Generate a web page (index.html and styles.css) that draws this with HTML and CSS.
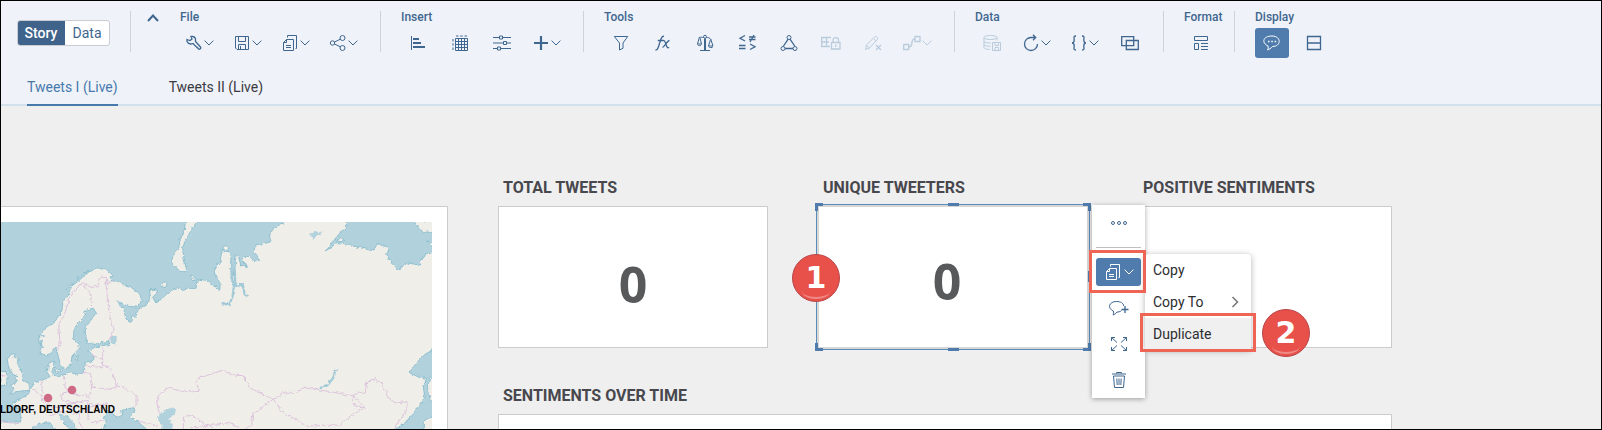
FILE: index.html
```html
<!DOCTYPE html>
<html lang="en">
<head>
<meta charset="utf-8">
<title>Tweets Story</title>
<link rel="stylesheet" href="styles.css">
</head>
<body>
<svg class="defs" aria-hidden="true">
  <symbol id="chev" viewBox="0 0 10 6"><path d="M.6.6 5 5 9.400.6"/></symbol>
  <symbol id="copy" viewBox="0 0 18 18"><path d="M5.500 5.500H12.500V16.500H2.500V8.500zM5.500 5.500V8.500H2.500M5 11.500h5M5 13.500h5M6.500 3.500V1.500H15.500V14.500H14.500"/></symbol>
</svg>
<div class="app">
  <header class="header">
    <div class="toolbar">
      <div class="mode">
        <button class="mode-btn mode-on">Story</button><button class="mode-btn">Data</button>
      </div>
      <div class="collapse">
        <button class="collapse-btn" aria-label="Collapse"><svg viewBox="0 0 12 8"><path d="M1 7l5-5.500L11 7"/></svg></button>
      </div>
      <section class="group">
        <h2 class="group-name">File</h2>
        <div class="tools">
          <button class="tool split" aria-label="Edit story"><svg class="ico" viewBox="0 0 18 18"><path class="mid" d="M2 5.500 5 6.500 7 5 6 2.500C8 2 10 3 10.500 5v2.500l5 5.500c1 1.200-.8 3-2.200 1.800L8 9.500C5.500 10.500 3 9.500 2 7.500zM12.800 13.200h.4"/></svg><svg class="chev"><use href="#chev"/></svg></button>
          <button class="tool split" aria-label="Save"><svg class="ico" viewBox="0 0 18 18"><path d="M2.500 2.500h13v13H4l-1.500-1.500zM5.500 2.500v5h7v-5M5.500 15.500v-5h7v5M7.500 12v3"/></svg><svg class="chev"><use href="#chev"/></svg></button>
          <button class="tool split" aria-label="Copy"><svg class="ico"><use href="#copy"/></svg><svg class="chev"><use href="#chev"/></svg></button>
          <button class="tool split" aria-label="Share"><svg class="ico" viewBox="0 0 18 18"><circle cx="3.500" cy="9" r="2.200"/><circle cx="13.500" cy="4" r="2.500"/><circle cx="13.500" cy="14" r="2.500"/><path d="M5.500 8 11.300 5.200M5.500 10l5.800 2.800"/></svg><svg class="chev"><use href="#chev"/></svg></button>
        </div>
      </section>
      <section class="group">
        <h2 class="group-name">Insert</h2>
        <div class="tools">
          <button class="tool" aria-label="Chart"><svg class="ico" viewBox="0 0 18 18"><path d="M2.500 2v14"/><path class="bold" d="M4 5h6M4 9h8M4 13h12"/></svg></button>
          <button class="tool" aria-label="Table"><svg class="ico" viewBox="0 0 18 18"><path d="M4.500 4.500h12v12h-12zM7.500 4.500v12M10.500 4.500v12M13.500 4.500v12M4.500 7.500h12M4.500 10.500h12M4.500 13.500h12M5 2h2.500M9.200 2h2.500M13.500 2H16M2 5v2.500M2 9.200v2.500M2 13.500V16"/></svg></button>
          <button class="tool" aria-label="Input control"><svg class="ico" viewBox="0 0 18 18"><path d="M0 3.500h6M10 3.500h8M0 9h10M14 9h4M0 14.500h4M8 14.500h10M6.500 2h3v3h-3zM10.500 7.500h3v3h-3zM4.500 13h3v3h-3z"/></svg></button>
          <button class="tool split" aria-label="Add"><svg class="ico" viewBox="0 0 18 18"><path class="heavy" d="M9 2v14M2 9h14"/></svg><svg class="chev"><use href="#chev"/></svg></button>
        </div>
      </section>
      <section class="group">
        <h2 class="group-name">Tools</h2>
        <div class="tools">
          <button class="tool" aria-label="Filter"><svg class="ico" viewBox="0 0 18 18"><path d="M2.300 2.500h13.400L11 9v5.200L7.500 16V9z"/></svg></button>
          <button class="tool" aria-label="Formula"><svg class="ico" viewBox="0 0 18 18"><path class="mid" d="M1.500 16c1.500.2 2-.5 2.500-2L7.200 4.500C7.800 2.600 8.500 2 10 2.300M3.800 6.500h5.500M9 6.500c2-.5 2 1 3 4s1.500 3.700 3.200 3M15.500 6.500c-2 0-5.500 6.500-7 7"/></svg></button>
          <button class="tool" aria-label="Conditional formatting"><svg class="ico" viewBox="0 0 18 18"><circle cx="9" cy="2.800" r="1.500"/><path d="M2.500 4C5 2.500 6 3.500 7.500 3.500M10.500 3.500c1.500 0 3 0 5 2.500M4 16.500h10M3 4.500 1.500 10h4L4 4M1.500 10.500c.5 1.500 3.500 1.500 4 0M14.500 5.500 12.500 12h4.500L15 6M12.500 12.500c.7 1.500 3.800 1.500 4.500 0"/><path class="bold" d="M9 4.500v12"/></svg></button>
          <button class="tool" aria-label="Comparison"><svg class="ico" viewBox="0 0 18 18"><path class="mid" d="M7 1.500 2 4.200 7 7M11 3h6.500M11 5.500h6.500M16 1l-4 7M1 11.500h6.500M1 14.500h6.500M12 10l5 2.800L12 15.500"/></svg></button>
          <button class="tool" aria-label="Linked analysis"><svg class="ico" viewBox="0 0 18 18"><path class="mid" d="M8.200 5.200 3.500 12M10 5.200 14.700 12M5 14.500h8"/><circle cx="9" cy="3.500" r="2"/><circle cx="3" cy="14.500" r="2"/><circle cx="15" cy="14.500" r="2"/></svg></button>
          <button class="tool" disabled aria-label="Lock cells"><svg class="ico wide" viewBox="0 0 20 18"><path class="mid" d="M0 3.500h10M0 8h8M0 12.500h9M.7 3.500v9M5.500 3.500v9M10.500 8.500h8.500v6.500h-8.500zM12 8.500V6c0-3.300 5.500-3.300 5.500 0v2.500M14.700 10.500v2.500"/></svg></button>
          <button class="tool" disabled aria-label="Clear edits"><svg class="ico" viewBox="0 0 18 18"><path d="M1.500 15.500 2.500 11 10.500 3c1.500-1.500 4 .8 2.700 2.500L5.500 14zM9.500 4.500l2.500 2.500M2.500 11.500l3 2.500"/><path class="mid" d="m12 11 5 5M17 11l-5 5"/></svg></button>
          <button class="tool split" disabled aria-label="Link"><svg class="ico" viewBox="0 0 18 18"><path class="mid" d="M.7 10.500h5v5h-5zM12 2.500h5v5h-5zM5.500 13C12 13 6 5 12 5"/></svg><svg class="chev"><use href="#chev"/></svg></button>
        </div>
      </section>
      <section class="group">
        <h2 class="group-name">Data</h2>
        <div class="tools">
          <button class="tool" disabled aria-label="Save data"><svg class="ico" viewBox="0 0 18 18"><ellipse cx="7.500" cy="3.500" rx="6.500" ry="2"/><path d="M1 3.500v10c0 1 2 1.800 6 2M14 3.500v3M1 7c0 1.500 3 2 7 2M1 10.300c0 1.400 3 2 6.500 2M9.500 8.500h8v8H9.500zM12 8.500v3h3.500v-3M12 16.500v-3h3.500v3"/></svg></button>
          <button class="tool split" aria-label="Refresh"><svg class="ico" viewBox="0 0 18 18"><path class="mid" d="M15.500 10A6.500 6.500 0 1 1 9 3.500h4M11 .8l2.700 2.700L11 6.200"/></svg><svg class="chev"><use href="#chev"/></svg></button>
          <button class="tool split" aria-label="Variables"><svg class="ico" viewBox="0 0 18 18"><path class="mid" d="M6 2C3 2 4.200 4 4.200 6S4 9 2 9c2 0 2.200 1 2.200 3S3 16 6 16M12 2c3 0 1.800 2 1.800 4s.2 3 2.200 3c-2 0-2.200 1-2.200 3s1.200 4-1.800 4"/></svg><svg class="chev"><use href="#chev"/></svg></button>
          <button class="tool" aria-label="Blend data"><svg class="ico" viewBox="0 0 18 18"><path class="mid" d="M.7 2.700h12v9h-12zM5.300 6.500h12v9h-12z"/></svg></button>
        </div>
      </section>
      <section class="group">
        <h2 class="group-name">Format</h2>
        <div class="tools">
          <button class="tool" aria-label="Layout"><svg class="ico" viewBox="0 0 18 18"><path d="M2.500 2.500h13v4h-13zM2.500 9.500h4v6h-4zM9 9.500h7M9 12.500h7M9 15.500h7"/></svg></button>
        </div>
      </section>
      <section class="group group-last">
        <h2 class="group-name">Display</h2>
        <div class="tools">
          <button class="tool tool-on" aria-label="Comments"><svg class="ico" viewBox="0 0 18 18"><path d="M9 2c9.500 0 9.500 10.500.5 10.500-1.500 1.800-3.500 3-5 3.500.7-1 1-2.500.5-4C-1.500 9-.5 2 9 2z"/><path class="mid" d="M5 7.500h1.500M8.300 7.500h1.500M11.600 7.500h1.500"/></svg></button>
          <button class="tool" aria-label="Split view"><svg class="ico" viewBox="0 0 18 18"><path class="mid" d="M2.500 2.500h13v13h-13zM2.500 9h13"/></svg></button>
        </div>
      </section>
    </div>
    <nav class="tabs">
      <a class="tab tab-on" href="#">Tweets I (Live)</a>
      <a class="tab" href="#">Tweets II (Live)</a>
    </nav>
  </header>

  <main class="canvas">
    <div class="map-card">
      <svg class="map" viewBox="3 63 1293 624" preserveAspectRatio="xMinYMin slice" role="img" aria-label="Map of tweets">
        <defs>
          <filter id="rough" filterUnits="userSpaceOnUse" x="0" y="40" width="1320" height="680">
            <feTurbulence type="fractalNoise" baseFrequency=".09" numOctaves="2" seed="4"/>
            <feDisplacementMap in="SourceGraphic" scale="12" xChannelSelector="R" yChannelSelector="G"/>
          </filter>
        </defs>
        <rect class="sea" width="1400" height="800"/>
        <g filter="url(#rough)">
          <g class="land">
            <path d="M850 40 850 65 838 70 822 82 810 98 808 112 815 122 790 128 765 132 762 155 782 182 762 178 748 166 732 166 728 178 742 200 722 192 716 168 708 160 705 195 700 225 692 200 693 155 682 150 665 154 660 180 648 197 643 212 648 230 660 245 660 268 638 250 618 238 592 234 588 262 566 262 550 268 532 260 510 270 482 296 465 302 458 288 470 278 468 266 448 266 452 290 440 310 415 325 408 345 395 345 393 362 378 354 370 322 350 300 385 316 412 318 425 302 420 280 395 260 366 248 352 240 330 240 338 222 318 204 290 204 262 214 240 236 214 256 205 280 190 300 184 335 160 368 138 378 118 402 122 432 122 456 138 466 155 455 168 438 174 465 182 490 190 506 212 496 216 465 240 440 232 425 220 412 222 385 235 365 250 350 258 328 280 322 288 335 275 355 256 380 256 402 262 425 285 430 325 420 330 430 285 438 265 450 280 462 278 480 258 482 252 495 250 512 235 520 215 515 195 520 175 527 160 522 155 510 166 495 160 480 145 488 142 515 150 527 125 538 105 545 90 565 85 582 62 596 38 604 40 612 62 625 62 663 0 663 0 720 98 720 98 678 122 668 150 665 160 680 180 700 230 700 205 680 178 650 180 640 200 645 222 668 240 700 262 700 268 685 285 690 310 685 318 660 312 645 328 628 340 640 352 650 368 642 365 628 402 620 405 630 388 645 420 668 440 685 470 720 1188 720 1188 682 1216 668 1228 650 1258 615 1275 590 1270 558 1280 532 1255 528 1228 515 1250 485 1275 460 1310 440 1310 152 1272 160 1258 192 1222 186 1192 208 1178 190 1160 162 1168 140 1130 128 1122 150 1080 140 1045 130 1012 124 978 150 1008 110 1040 78 1038 40z"/>
            <path d="M622 50 590 63 575 85 560 110 548 140 552 170 560 212 540 212 515 185 520 160 540 140 538 120 552 95 555 70 580 50z"/>
            <path d="M30 460 45 458 42 472 56 475 50 490 60 500 68 520 70 538 88 548 85 568 50 572 28 580 42 565 32 552 48 545 50 525 38 520 25 495 22 475z"/>
            <path d="M0 512 18 512 22 530 18 550 0 558zM484 250l8-8 10 6-6 12-10-2zM572 222l16 12-4 4-12-8zM226 475l10-15-4 18zM1282 555 1290 530 1310 550 1310 600 1295 600 1285 580zM1240 60h70v30l-40 5zM1280 120l20 5v15zM1270 660l30-15v50h-30zM165 500l15 8-5 6-10-4zM665 145l10-12 12 8-6 8zM1010 120l12-10 14 6-10 6z"/>
            <path d="M196 270l8-10M208 256l16-10M228 236l18-12M252 216l22-8M280 206l12-6M300 204l6-6"/>
          </g>
          <g class="inlets">
            <path class="water" d="M693 190 695 225 702 255 698 285 688 312 665 306M704 200 706 255 728 250 734 280 745 286M1008 504 1000 530 985 550 962 562M118 400l12 8M116 420l12 4M118 440l12-4"/>
            <path class="lake" d="M330 405 345 405 352 420 342 432 332 425zM478 640 505 622 528 622 525 640 508 652 518 675 515 700 485 700 488 672 475 660zM930 98l15-8 12 5 10-4-4 10-15 4-8 14zM1232 108l5 12-8-4z"/>
          </g>
          <g class="borders">
            <path d="M172 450 180 430 176 370 192 345 210 285 230 262 248 245 275 260 292 255 300 228 318 230 322 248 340 238M250 250 272 280 275 318M318 240 322 290 330 350 342 385 325 420M308 440 308 495M275 462 308 475M255 495 295 498 315 495 335 505 345 540 352 555 330 565 275 558 272 520 250 512M275 558 268 585 262 610 300 612 322 608M352 555 375 562 412 585 410 610 402 620M125 540 128 600 150 615M190 525 195 555 200 565 225 580 265 585M95 560 128 590M180 580 200 572M180 580 190 600 225 605 262 598M128 615 182 620 200 612 232 605M150 645 178 635 210 632 230 610M215 640 240 635 262 620 300 612M240 635 235 660 250 685M262 650 275 665 312 660M262 620 265 650M3 522 15 525M3 663 60 668M415 660 470 675"/>
            <path d="M478 638 470 600 478 580 505 560 548 572 598 568 588 545 600 530 668 508 705 522 728 524 752 562 820 595 800 608 758 640 755 672 725 690M728 524 740 545M550 700 550 648 575 642 612 668 640 680M575 680 610 678 640 670 690 665 720 680M820 595 850 575 880 578 915 560 990 572 1060 585 1095 620 1060 640 1020 672 920 675 890 655 850 638 820 595M1060 585 1075 572 1095 578 1100 545 1120 535 1145 545 1165 590 1185 605 1225 602 1212 640 1188 672 1180 700M1060 585 1060 610 1095 620"/>
          </g>
        </g>
        <circle class="dot" cx="144" cy="591" r="13"/>
        <circle class="dot" cx="216" cy="567" r="13"/>
        <text class="map-label" x="345" y="636" text-anchor="end">LLDORF, DEUTSCHLAND</text>
      </svg>
    </div>

    <div class="board">
      <div class="kpis">
        <section class="kpi"><h3 class="title">TOTAL TWEETS</h3><div class="tile"><span class="value">0</span></div></section>
        <section class="kpi">
          <h3 class="title">UNIQUE TWEETERS</h3>
          <div class="tile selected">
            <span class="value value-up">0</span>
            <div class="frame"><i class="h tl"></i><i class="h tr"></i><i class="h bl"></i><i class="h br"></i><i class="h tm"></i><i class="h bm"></i><i class="h rm"></i></div>
            <span class="step step-one">1</span>
            <div class="actions">
              <button class="act" aria-label="More"><svg class="ico" viewBox="0 0 18 18"><circle cx="3" cy="9" r="1.500"/><circle cx="9" cy="9" r="1.500"/><circle cx="15" cy="9" r="1.500"/></svg></button>
              <hr class="rule">
              <div class="copy-slot">
                <button class="act act-on" aria-label="Copy options"><svg class="ico"><use href="#copy"/></svg><svg class="chev"><use href="#chev"/></svg></button>
                <div class="menu">
                  <button class="item">Copy</button>
                  <button class="item">Copy To<svg class="more" viewBox="0 0 8 12"><path d="M1.500 1 6.500 6l-5 5"/></svg></button>
                  <button class="item item-on">Duplicate<span class="mark mark-item"></span></button>
                  <span class="step step-two">2</span>
                </div>
                <span class="mark mark-copy"></span>
              </div>
              <button class="act" aria-label="Add comment"><svg class="ico wide" viewBox="0 0 20 18"><path d="M12.500 11.500C11 13 9 13 8 13c-1 1.500-2.500 2.500-4 3 .7-1 .8-2.500.3-4C-2 9 0 2.500 7.500 2.500c4 0 7 1.500 7.200 4.500"/><path class="mid" d="M16 7v7M12.500 10.500h7"/></svg></button>
              <button class="act" aria-label="Full screen"><svg class="ico" viewBox="0 0 18 18"><path d="M1.500 6V2.500H5M13 2.500h3.500V6M1.500 12v3.500H5M13 15.500h3.500V12M1.500 2.500 7 7.500M16.500 2.500 11 7.500M1.500 15.500 7 10.500M16.500 15.500 11 10.500"/></svg></button>
              <button class="act" aria-label="Delete"><svg class="ico" viewBox="0 0 18 18"><path d="M2 3h14M6.500 2.500v-1h5v1M3.500 5l1 11.500h9l1-11.500zM6.800 7.500l.4 6.500M9 7.500V14M11.200 7.500l-.4 6.500"/></svg></button>
            </div>
          </div>
        </section>
        <section class="kpi"><h3 class="title">POSITIVE SENTIMENTS</h3><div class="tile"></div></section>
      </div>
      <section class="trend"><h3 class="title">SENTIMENTS OVER TIME</h3><div class="tile"></div></section>
    </div>
  </main>
</div>
</body>
</html>
```

FILE: styles.css
```css
* { box-sizing: border-box; }
body { margin: 0; font-family: Roboto, "Liberation Sans", sans-serif; font-size: 14px; }
button { font: inherit; border: 0; background: none; padding: 0; margin: 0; color: inherit; }
svg { fill: none; stroke: currentColor; stroke-width: 1; display: block; flex: none; }
h2, h3 { margin: 0; }
.defs { position: absolute; width: 0; height: 0; }

.app { height: 100vh; border: 1px solid #000; background: #efefef; overflow: hidden; display: flex; flex-direction: column; }

.header { background: #eff3f9; border-bottom: 2px solid #d3e1ec; }
.toolbar { display: flex; height: 62px; padding-left: 16px; color: #3f668f; }
.mode { display: flex; width: 93px; height: 26px; margin-top: 19px; border: 1px solid #c9cdd2; border-radius: 3px; overflow: hidden; background: #fff; }
.mode-btn { flex: 1; font-size: 14px; }
.mode-on { background: #3f638b; color: #fff; font-weight: 500; flex: 0 0 48px; margin: -1px 0 -1px -1px; }
.collapse { margin: 10px 0 0 20px; height: 41px; padding: 3px 21px 0 16px; border-left: 1px solid #cdd3d9; }
.collapse-btn { width: 12px; height: 8px; display: block; }
.collapse-btn svg { width: 12px; height: 8px; stroke-width: 2; }
.group { display: flex; flex-direction: column; padding-right: 16px; margin-right: 20px; border-right: 1px solid #cdd3d9; height: 41px; margin-top: 10px; }
.group-last { border-right: 0; }
.group-name { font-size: 12px; font-weight: 500; line-height: 12px; flex: 0 0 17px; width: 0; min-width: 100%; white-space: nowrap; }
.tools { display: flex; gap: 8px; }
.tool { width: 34px; height: 30px; display: flex; align-items: center; justify-content: center; border-radius: 3px; }
.split { width: 40px; gap: 1px; padding-right: 2px; }
.tool:disabled { color: #b9cbdc; }
.tool-on { background: #4f7cac; color: #fff; }
.ico { width: 18px; height: 18px; }
.wide { width: 20px; }
.chev { width: 10px; height: 6px; }
.mid { stroke-width: 1.300; }
.bold { stroke-width: 2; }
.heavy { stroke-width: 2.200; }

.tabs { display: flex; gap: 51px; padding-left: 26px; }
.tab { height: 43px; margin-bottom: -2px; padding-top: 14px; line-height: 20px; font-size: 14px; color: #3a3a3f; text-decoration: none; }
.tab-on { color: #4779ad; border-bottom: 2px solid #4779ad; }

.canvas { flex: 1; display: grid; grid-template-columns: minmax(0, 447fr) minmax(0, 944fr) minmax(0, 209fr); grid-template-rows: minmax(0, 1fr); padding-top: 70px; min-height: 0; }
.map-card { min-height: 0; margin-top: 30px; background: #fff; border: 1px solid #ccc; border-width: 1px 1px 0 0; padding: 15px 15px 0 0; overflow: hidden; }
.map { width: 100%; height: 100%; }
.sea { fill: #b1d1dd; stroke: none; }
.land { fill: #f0eee9; stroke: #8fc0cf; stroke-width: 3; stroke-linejoin: round; }
.water { stroke: #a3cad7; stroke-width: 7; }
.lake { fill: #b1d1dd; stroke: none; }
.borders { stroke: #dcc3dd; stroke-width: 3; stroke-linejoin: round; }
.dot { fill: #cf6a86; stroke: none; }
.map-label { font: bold 30px "Liberation Sans", sans-serif; fill: #000; stroke: none; }

.board { margin-left: 50px; display: flex; flex-direction: column; gap: 36px; min-width: 0; }
.kpis { display: grid; grid-template-columns: 270fr 270fr 254fr; gap: 50px; }
.title { font-size: 16px; font-weight: 700; line-height: 24px; padding-left: 5px; margin-bottom: 6px; color: #47474d; white-space: nowrap; }
.tile { height: 142px; background: #fff; border: 1px solid #ccc; display: flex; align-items: center; justify-content: center; position: relative; }
.value { font-family: "Open Sans", "Noto Sans", sans-serif; font-size: 50px; font-weight: 700; line-height: 60px; color: #58595b; padding-top: 14px; }
.value-up { padding: 8px 12px 0 0; }
.selected { z-index: 2; }
.frame { position: absolute; inset: -3px; border: 1px solid #5b8bbb; box-shadow: inset 0 0 0 2px #d6d6d6; }
.h { position: absolute; width: 8px; height: 8px; border: 0 solid #4f7cac; }
.tl { top: -2px; left: -2px; border-width: 3px 0 0 3px; }
.tr { top: -2px; right: -2px; border-width: 3px 3px 0 0; }
.bl { bottom: -2px; left: -2px; border-width: 0 0 3px 3px; }
.br { bottom: -2px; right: -2px; border-width: 0 3px 3px 0; }
.tm, .bm { width: 11px; height: 3px; left: calc(50% - 5px); background: #4f7cac; }
.tm { top: -2px; }
.bm { bottom: -2px; }
.rm { width: 3px; height: 11px; right: -2px; top: calc(50% - 6px); background: #4f7cac; }

.step { position: absolute; width: 48px; height: 48px; border-radius: 50%; background: #e8504a; border: 1px solid #b9474a; color: #fff; font: bold 30px/46px "DejaVu Sans", sans-serif; text-align: center; }
.step::after { content: ""; position: absolute; left: 9px; right: 9px; bottom: 2px; height: 14px; border-bottom: 2px solid #f08a86; border-radius: 50%; }
.step-one { left: -27px; top: 47px; }

.actions { position: absolute; left: calc(100% + 5px); top: -2px; width: 53px; padding: 4px; background: #fff; box-shadow: 0 1px 5px rgba(0, 0, 0, .35); display: flex; flex-direction: column; gap: 8px; color: #3f668f; }
.act { width: 100%; height: 28px; display: flex; align-items: center; justify-content: center; gap: 2px; border-radius: 3px; }
.act-on { background: #4f7cac; color: #fff; }
.rule { width: 100%; margin: 2px 0; border: 0; border-top: 1px solid #bfbfbf; }
.copy-slot { position: relative; }
.mark { position: absolute; border: 3px solid #ee6555; }
.mark-copy { inset: -8px -5px -7px -7px; }
.menu { position: absolute; left: calc(100% + 4px); top: -4px; width: 106px; background: #fff; border-radius: 4px; box-shadow: 0 1px 6px rgba(0, 0, 0, .3); }
.item { position: relative; width: 100%; height: 32px; padding: 0 12px 0 8px; display: flex; align-items: center; justify-content: space-between; color: #2d2d30; font-size: 14px; }
.item-on { background: #f0f0f0; }
.more { width: 8px; height: 12px; stroke: #7a7a7a; stroke-width: 1.600; }
.mark-item { inset: -5px -5px -2px -5px; }
.step-two { left: 117px; top: 55px; }
```
